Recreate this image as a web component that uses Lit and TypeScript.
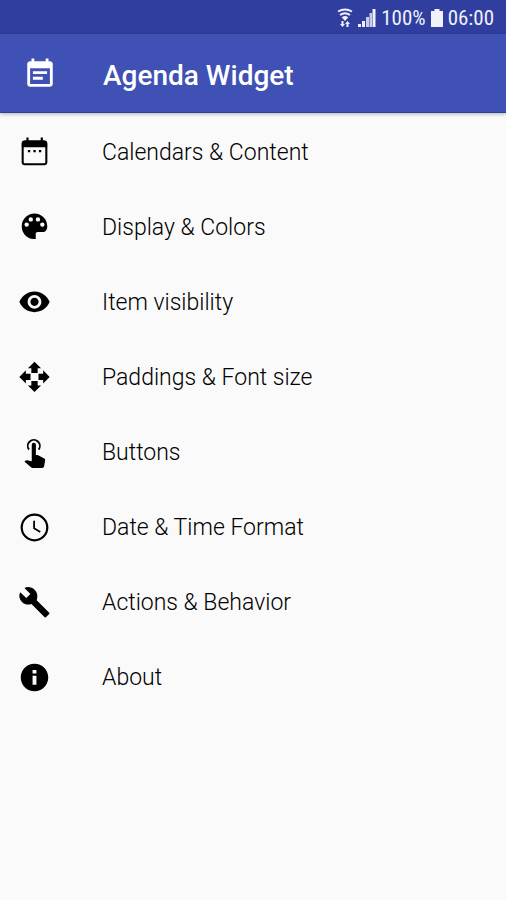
import { LitElement, html, css, svg } from "lit";
import { customElement } from "lit/decorators.js";

const solid = (d: string) => svg`<path fill="currentColor" fill-rule="evenodd" d=${d}></path>`;

const items = [
  {
    label: "Calendars & Content",
    icon: svg`<path fill="none" stroke="currentColor" stroke-width="1.5" d="M5 4h14q1.6 0 1.6 1.6v13.3q0 1.6-1.6 1.6H5q-1.6 0-1.6-1.6V5.6q0-1.6 1.6-1.6z"></path>
      <path fill="currentColor" d="M6.1 1h1.6v2.200h8.800V1h1.600v2.200H19q2.200 0 2.200 2.200V8.200H2.800V5.400Q2.800 3.200 5 3.200h1.100zM7.200 10.200h1.700v1.700H7.200zM11.200 10.200h1.700v1.700h-1.700zM15.200 10.200h1.700v1.700h-1.700z"></path>`,
  },
  {
    label: "Display & Colors",
    icon: solid("M12 1.900C6.900 1.900 2.700 6.100 2.700 11.200c0 4.800 3.800 9 8.700 9.200h1.500v-3.700c0-.9.6-1.400 1.500-1.400H18c1.900 0 3.300-1.800 3.300-4.100 0-5.200-4.200-9.300-9.300-9.300zM6.300 8.300a1.600 1.600 0 1 1 0 3.200 1.600 1.600 0 0 1 0-3.200zM9.300 4.500a1.600 1.600 0 1 1 0 3.200 1.600 1.600 0 0 1 0-3.200zM14.500 4.500a1.600 1.600 0 1 1 0 3.200 1.600 1.600 0 0 1 0-3.200zM17.700 8.300a1.600 1.600 0 1 1 0 3.200 1.600 1.600 0 0 1 0-3.200z"),
  },
  {
    label: "Item visibility",
    icon: solid("M12 4C7 4 2.730 7.110 1 11.500c1.730 4.390 6 7.500 11 7.500s9.270-3.110 11-7.500C21.270 7.110 17 4 12 4zm0 12.500c-2.760 0-5-2.240-5-5s2.240-5 5-5 5 2.240 5 5-2.240 5-5 5zm0-8c-1.660 0-3 1.340-3 3s1.340 3 3 3 3-1.340 3-3-1.340-3-3-3z"),
  },
  {
    label: "Paddings & Font size",
    icon: solid("M12 .6l4.800 4.700h-2.500v3.400H9.700V5.300H7.200zM12 22.600l4.800-4.700h-2.500v-3.400H9.700v3.400H7.200zM1 11.600l4.700-4.800v2.500h3.400v4.600H5.700v2.500zM23 11.600l-4.700-4.800v2.500h-3.400v4.600h3.400v2.500z"),
  },
  {
    label: "Buttons",
    icon: svg`<path fill="none" stroke="currentColor" stroke-width="1.300" d="M8 9.900A4.400 4.400 0 1 1 15 9.900"></path>
      <path fill="currentColor" d="M18.800 16.200L14.300 13.900H13V6.400a1.500 1.500 0 0 0-3 0v11.900l-3.430-.7q-.6-.1-1 .3l-.8.800 4.940 4.200q.5.400 1.060.400h6.790q1.300 0 1.440-1.300l.75-4.400q.1-1-.95-1.400z"></path>`,
  },
  {
    label: "Date & Time Format",
    icon: svg`<circle cx="12" cy="12" r="9.300" fill="none" stroke="currentColor" stroke-width="1.600"></circle>
      <path fill="none" stroke="currentColor" stroke-width="1.300" d="M11.700 7v5.500l4.500 2.700"></path>`,
  },
  {
    label: "Actions & Behavior",
    icon: solid("M22.700 19.400L13.600 10.300C14.500 7.800 14.200 4.900 12.100 2.800 10 .7 7 .3 4.700 1.400L9 5.800 6 8.800 1.600 4.500C.4 6.900.9 9.600 2.900 11.600c1.900 1.900 4.600 2.400 6.900 1.500L19.400 22.700q.5.300.9 0l2.500-2.500q.3-.4-.1-.8z"),
  },
  {
    label: "About",
    icon: solid("M12 2C6.480 2 2 6.480 2 12s4.480 10 10 10 10-4.480 10-10S17.520 2 12 2zm1.400 15.200h-2.800v-6.400h2.800v6.400zm0-8.200h-2.800V6.600h2.800V9z"),
  },
];

@customElement("app-root")
export class AppRoot extends LitElement {
  static styles = css`
    :host {
      display: block;
      min-height: 100vh;
      background: #fafafa;
      color: #000;
      font-family: Roboto, "Noto Sans", sans-serif;
    }
    .status {
      display: flex;
      align-items: center;
      justify-content: flex-end;
      gap: 5px;
      height: 34px;
      padding: 2px 12px 0 0;
      box-sizing: border-box;
      background: #303f9f;
      color: #f0f1fb;
      font-family: "Roboto Condensed", "Liberation Sans Narrow", Roboto, sans-serif;
      font-size: 21px;
      line-height: 32px;
    }
    .status svg {
      display: block;
    }
    .bar {
      display: flex;
      align-items: center;
      gap: 46px;
      height: 79px;
      padding: 2px 23px 0;
      box-sizing: border-box;
      background: #3f51b5;
      border-bottom: 1px solid #2444a0;
      box-shadow: 0 1px 4px rgba(0, 0, 0, 0.3);
      color: #fff;
    }
    .bar svg {
      width: 34px;
      height: 34px;
    }
    h1 {
      margin: 0;
      padding-top: 3px;
      font-size: 28px;
      font-weight: 500;
      line-height: 32px;
    }
    ul {
      margin: 0;
      padding: 2px 0 0;
      list-style: none;
    }
    .item {
      display: flex;
      align-items: center;
      gap: 51px;
      width: 100%;
      height: 75px;
      padding: 0 18px;
      border: 0;
      background: none;
      color: inherit;
      font: inherit;
      font-size: 23px;
      font-weight: 300;
      line-height: 28px;
      text-align: left;
      cursor: pointer;
    }
    .item svg {
      flex: none;
      width: 33px;
      height: 33px;
      color: #000;
    }
  `;

  render() {
    return html`
      <div class="status">
        <svg width="16" height="20" viewBox="0 0 16 20" fill="none" stroke="currentColor" stroke-width="2" aria-label="Wi-Fi">
          <path d="M1 3.500Q8-.5 15 3.500M3 7Q8 3.500 13 7M5.500 10Q8 8 10.500 10"></path>
          <path fill="currentColor" stroke="none" d="M8 13L5 9.500h6zM4.500 13h2v3h1.500L5.500 19 3 16h1.500zM9.500 19v-3H8l2.500-3 2.500 3h-1.500v3z"></path>
        </svg>
        <svg width="18" height="18" viewBox="0 0 18 18" fill="currentColor" aria-label="Signal">
          <path d="M0 15h3v3H0zM4 12h3v6H4z"></path>
          <path opacity=".8" d="M8 8h3v10H8zM11.500 4h2.500v14h-2.500z"></path>
          <path d="M14.500 0h3v18h-3z"></path>
        </svg>
        <span>100%</span>
        <svg width="12" height="18" viewBox="0 0 12 18" fill="currentColor" aria-label="Battery">
          <path d="M3.500 0h5v2H12v16H0V2h3.500z"></path>
        </svg>
        <span>06:00</span>
      </div>
      <header class="bar">
        <svg viewBox="0 0 24 24" aria-hidden="true">
          ${solid("M17 10H7v2h10v-2zm2-7h-1V1h-2v2H8V1H6v2H5c-1.110 0-1.990.9-1.990 2L3 19c0 1.100.89 2 2 2h14c1.100 0 2-.9 2-2V5c0-1.100-.9-2-2-2zm0 16H5V8h14v11zm-5-5H7v2h7v-2z")}
        </svg>
        <h1>Agenda Widget</h1>
      </header>
      <ul>
        ${items.map(
          (item) => html`<li>
            <button class="item" type="button">
              <svg viewBox="0 0 24 24" aria-hidden="true">${item.icon}</svg>
              <span>${item.label}</span>
            </button>
          </li>`
        )}
      </ul>
    `;
  }
}
